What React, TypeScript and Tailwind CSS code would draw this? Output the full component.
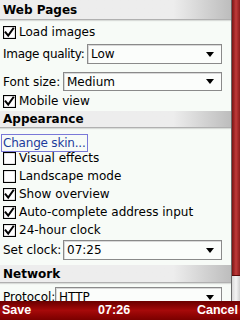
import React from "react";

const font = { fontFamily: '"DejaVu Sans", "Liberation Sans", sans-serif' };
const barFont = { fontFamily: '"Liberation Sans", Arial, sans-serif' };

function Check({ checked }: { checked: boolean }) {
  return (
    <svg width="13" height="13" viewBox="0 0 13 13" className="shrink-0">
      <rect x="0.5" y="0.5" width="12" height="12" fill="#ffffff" stroke="#000" strokeWidth="1.2" />
      {checked && (
        <path d="M2.6 6.4 L5.2 9.6 L10.2 2.6" fill="none" stroke="#000" strokeWidth="2" strokeLinecap="square" />
      )}
    </svg>
  );
}

function CheckRow({ label, checked, h = "h-[18px]" }: { label: string; checked: boolean; h?: string }) {
  return (
    <div className={`shrink-0 flex items-center ${h} pl-[3px] gap-[3px]`}>
      <Check checked={checked} />
      <span className="text-[12px] leading-none text-black whitespace-nowrap">{label}</span>
    </div>
  );
}

function Arrow() {
  return (
    <svg width="8" height="5" viewBox="0 0 8 5" className="shrink-0">
      <path d="M0 0 H8 L4 5 Z" fill="#000" />
    </svg>
  );
}

function Select({ value, className }: { value: string; className: string }) {
  return (
    <div
      className={`shrink-0 flex items-center justify-between border border-[#8a8a8a] bg-[#fbfdfb] pl-[3px] pr-[7px] shadow-[inset_1px_1px_0_#d8d8d8] ${className}`}
    >
      <span className="text-[12px] leading-none text-black">{value}</span>
      <Arrow />
    </div>
  );
}

function Header({ title, className = "" }: { title: string; className?: string }) {
  return (
    <div
      className={`shrink-0 flex items-center pl-[3px] bg-linear-to-r from-[#ededed] from-75% to-[#bdbdbd] border-b border-[#b0b0b0] shadow-[0_1px_1px_rgba(0,0,0,0.12)] ${className}`}
    >
      <span className="text-[12px] font-bold leading-none text-black">{title}</span>
    </div>
  );
}

export default function App() {
  return (
    <div className="w-[240px] h-[320px] overflow-hidden flex flex-col bg-[#f7fbf7]" style={font}>
      <div className="flex h-[301px] shrink-0 overflow-hidden">
        <div className="w-[231px] flex flex-col">
          <Header title="Web Pages" className="h-[20px]" />
          <CheckRow label="Load images" checked h="h-[24px]" />
          <div className="shrink-0 flex items-center h-[20px]">
            <span className="w-[87px] pl-[3px] text-[12px] leading-none whitespace-nowrap tracking-[-0.3px]">Image quality:</span>
            <Select value="Low" className="w-[135px] h-[20px]" />
          </div>
          <div className="shrink-0 flex items-center h-[19px] mt-[8px]">
            <span className="w-[63px] pl-[3px] text-[12px] leading-none whitespace-nowrap">Font size:</span>
            <Select value="Medium" className="w-[159px] h-[19px]" />
          </div>
          <CheckRow label="Mobile view" checked h="h-[20px]" />
          <Header title="Appearance" className="h-[17px]" />
          <div className="shrink-0 h-[21px] pt-[2px] pl-[1px]">
            <div className="inline-flex items-center h-[18px] w-[87px] border-[1.5px] border-[#7a78d8] pl-[1px]">
              <span className="text-[12px] leading-none text-[#1c3c9c] whitespace-nowrap tracking-[-0.2px]">Change skin...</span>
            </div>
          </div>
          <CheckRow label="Visual effects" checked={false} />
          <CheckRow label="Landscape mode" checked={false} />
          <CheckRow label="Show overview" checked />
          <CheckRow label="Auto-complete address input" checked />
          <CheckRow label="24-hour clock" checked />
          <div className="shrink-0 flex items-center h-[22px]">
            <span className="w-[63px] pl-[3px] text-[12px] leading-none whitespace-nowrap">Set clock:</span>
            <Select value="07:25" className="w-[159px] h-[20px]" />
          </div>
          <Header title="Network" className="h-[18px] mt-[4px]" />
          <div className="shrink-0 flex items-center h-[20px] mt-[4px]">
            <span className="w-[55px] pl-[3px] text-[12px] leading-none whitespace-nowrap">Protocol:</span>
            <Select value="HTTP" className="w-[167px] h-[20px]" />
          </div>
        </div>
        <div className="w-[9px] flex flex-col bg-[#ececec] border-l border-[#6a6a6a]">
          <div className="h-[276px] shrink-0 bg-linear-to-r from-[#7a1414] via-[#c03a3a] to-[#8a1c1c] border-b border-[#5a0a0a]" />
          <div className="flex-1 bg-linear-to-r from-[#d8d8d8] via-[#f4f4f4] to-[#d0d0d0]" />
        </div>
      </div>
      <div
        className="h-[19px] shrink-0 flex items-center justify-between px-[2px] bg-linear-to-b from-[#6a0000] via-[#a60a0a] to-[#7a0000]"
        style={barFont}
      >
        <span className="text-[12.5px] font-bold leading-none text-white">Save</span>
        <span className="text-[12.5px] font-bold leading-none text-white">07:26</span>
        <span className="text-[12.5px] font-bold leading-none text-white">Cancel</span>
      </div>
    </div>
  );
}
